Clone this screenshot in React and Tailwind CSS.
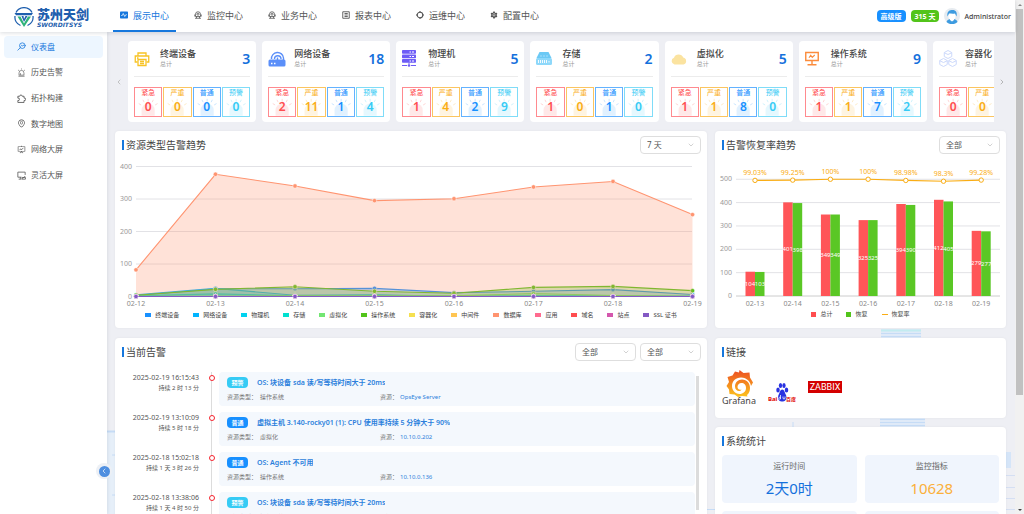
import { ChevronDown, ChevronLeft, ChevronRight } from 'lucide-react';
import {
    AiFillSetting,
    AiOutlineAlert,
    AiOutlineEnvironment,
    AiOutlineFundProjectionScreen
} from 'react-icons/ai';

/* ---------- icons ---------- */

const WaveIcon = ({ className }) => (
    <svg viewBox="0 0 16 16" className={className}>
        <rect x="0" y="1" width="16" height="14" rx="1.5" fill="currentColor" />
        <path d="M2.5 9h2L6.5 5l3 6 2-3.5h2" fill="none" stroke="#fff" strokeWidth="1.5" />
    </svg>
);

const MonitorIcon = ({ className }) => (
    <svg viewBox="0 0 16 16" className={className} fill="none" stroke="currentColor" strokeWidth="1.6">
        <path d="M3 11V6.5a5 5 0 0 1 10 0V11zM1.5 7v4M14.500 7v4M2 14.5h12" />
        <circle cx="8" cy="6.5" r="2" />
        <path d="M5 11v3.5M11 11v3.5" />
    </svg>
);

const ReportIcon = ({ className }) => (
    <svg viewBox="0 0 16 16" className={className} fill="none" stroke="currentColor" strokeWidth="1.8">
        <path d="M1.5 1.5h13v13h-13zM5 5h6.5M5 8h6.5M5 11h6.5" />
    </svg>
);

const OpsIcon = ({ className }) => (
    <svg viewBox="0 0 16 16" className={className} fill="none" stroke="currentColor" strokeWidth="2.2">
        <circle cx="8" cy="8" r="5.6" />
        <path d="M8 0v2.5M8 13.5V16M0 8h2.5M13.5 8H16" />
    </svg>
);

const DashboardIcon = ({ className }) => (
    <svg viewBox="0 0 16 16" className={className} fill="none" stroke="currentColor" strokeWidth="1.4" strokeLinecap="round">
        <circle cx="9.5" cy="6.5" r="5" />
        <path d="M6 10l-4.5 4.5M7 7.5l1.6-1.8 1.6 1.4L12 5.5" />
    </svg>
);

const PuzzleIcon = ({ className }) => (
    <svg viewBox="0 0 16 16" className={className} fill="none" stroke="currentColor" strokeWidth="1.5" strokeLinejoin="round">
        <path d="M1.5 4h3.3a2.2 2.2 0 1 1 4.4 0h3.3v3.3a2.2 2.2 0 1 1 0 4.2V15h-11v-3.5a2.2 2.2 0 1 0 0-4.2z" />
    </svg>
);

const ScreenIcon = ({ className }) => (
    <svg viewBox="0 0 16 16" className={className} fill="none" stroke="currentColor" strokeWidth="1.4">
        <path d="M8 11H1.5V2h13v5M3 14.5h5M6 11v3" />
        <path d="M10 13.5l4.5-4.5M9 11.5h6v3H9z" />
    </svg>
);

const PrinterIcon = () => (
    <svg viewBox="0 0 32 32" className="size-4" fill="none" stroke="#f7c325" strokeWidth="2.6">
        <path d="M8 10V4h16v6M7 22H2.5V10h27v12H25" />
        <path d="M8 17h16v12H8zM12 21h8M12 25h8M6 14h3" />
    </svg>
);

const RouterIcon = () => (
    <svg viewBox="0 0 36 32" className="h-4 w-[18px]" fill="none" stroke="#5b8ff9" strokeWidth="2.8">
        <path d="M7 16a12 12 0 0 1 24-2v6M13 16a6.5 6.5 0 0 1 13 0" />
        <rect x="1" y="17" width="34" height="14" rx="3" fill="#5b8ff9" stroke="none" />
        <path d="M19 13v6" />
        <path d="M6 25h3M12 25h3" stroke="#fff" />
    </svg>
);

const ServerIcon = () => (
    <svg viewBox="0 0 28 34" className="h-[17px] w-3.5" fill="#6d5cf6">
        <rect x="0" y="0" width="28" height="7.5" rx="1.5" />
        <rect x="0" y="9" width="28" height="7.5" rx="1.5" />
        <rect x="0" y="18" width="28" height="7.5" rx="1.5" />
        <path d="M13 25h2v4h-2zM0 30h10v2H0zM18 30h10v2H18z" />
        <circle cx="14" cy="31" r="2.6" />
        <path d="M15 3h3v2h-3zM20 3h4v2h-4zM15 12h3v2h-3zM20 12h4v2h-4zM15 21h3v2h-3zM20 21h4v2h-4z" fill="#fff" />
    </svg>
);

const StorageIcon = () => (
    <svg viewBox="0 0 32 26" className="h-[13px] w-4">
        <path d="M7 0h18l6 12H1z" fill="#6cc9f5" />
        <rect x="0" y="12" width="32" height="14" rx="3" fill="#8ed8fa" />
        <path d="M5 16v6M9 16v6M13 16v6M17 16v6M21 16v6M26 18v3" stroke="#fff" strokeWidth="1.8" />
        <path d="M9 8h2M15 8h2M21 8h2" stroke="#fff" strokeWidth="1.6" />
    </svg>
);

const CloudIcon = () => (
    <svg viewBox="0 0 32 24" className="h-3 w-4" fill="#fbe3a0">
        <path d="M7 23a7 7 0 0 1-1-13.5A10 10 0 0 1 24.5 9 7.2 7.2 0 0 1 25 23z" />
    </svg>
);

const OsIcon = () => (
    <svg viewBox="0 0 28 30" className="h-[15px] w-3.5" fill="none" stroke="#fb8c3c" strokeWidth="2.8">
        <path d="M1.5 3h25v16h-25zM14 19v8M5 27.5h18" />
        <path d="M8 13.5l3.5-5 3 4.5 5-5" strokeWidth="2.2" />
    </svg>
);

const ContainerIcon = () => (
    <svg viewBox="0 0 36 34" className="h-[17px] w-[18px]" fill="none" stroke="#ccd9fb" strokeWidth="2">
        <path d="M18 1l7.5 4v8L18 17l-7.5-4V5zM10.5 5.5L18 9l7.5-3.5" />
        <path d="M9 17l7.5 4v8L9 33l-7.5-4v-8zM1.5 21.5L9 25l7.5-3.5" />
        <path d="M27 17l7.5 4v8L27 33l-7.5-4v-8zM19.5 21.5L27 25l7.5-3.5" />
    </svg>
);

const BrandMark = () => (
    <svg viewBox="0 0 40 40" className="size-5 shrink-0" fill="none">
        <path d="M4 11a18 18 0 0 1 32 0M2 18a18 18 0 0 0 11 19M38 18a18 18 0 0 1-11 19" stroke="#1f5fae" strokeWidth="2.6" />
        <path d="M1 12h37l-3 4.5H4z" fill="#1f5fae" />
        <path d="M7 19h6l7 14 8-14h6L20 40z" fill="#2fb37a" />
        <path d="M15 18h12l-7 12z" fill="#1f5fae" />
        <path d="M19 18h4l-3 6z" fill="#fff" />
    </svg>
);

const Avatar = () => (
    <svg viewBox="0 0 32 32" className="size-4">
        <circle cx="16" cy="16" r="16" fill="#e6ebf0" />
        <path d="M5 28c2-6 7-6 11-6s9 0 11 6a16 16 0 0 1-22 0z" fill="#3d9be0" />
        <path d="M12 20h8v4l-4 3-4-3z" fill="#fff" />
        <rect x="9" y="8" width="14" height="15" rx="6" fill="#fff" />
        <path d="M7 17C5 6 12 4 17 4c7 0 10 5 8 13l-3-6c-4 1-9 0-12 0z" fill="#3d9be0" />
    </svg>
);

const AlarmShape = () => (
    <svg viewBox="0 0 28 20" className="absolute bottom-0 left-0 w-full" fill="currentColor" stroke="currentColor">
        <path d="M7 20v-6a7 7 0 0 1 14 0v6z" opacity="0.13" stroke="none" />
        <path d="M14 2v3M8.5 3l1.2 2.5M19.5 3l-1.2 2.5M4 7l2.5 1.5M24 7l-2.5 1.5" opacity="0.3" strokeWidth="0.8" />
    </svg>
);

/* ---------- data ---------- */

const tabs = [
    { label: '展示中心', icon: WaveIcon, active: true },
    { label: '监控中心', icon: MonitorIcon },
    { label: '业务中心', icon: MonitorIcon },
    { label: '报表中心', icon: ReportIcon },
    { label: '运维中心', icon: OpsIcon },
    { label: '配置中心', icon: AiFillSetting }
];

const menu = [
    { label: '仪表盘', icon: DashboardIcon, active: true },
    { label: '历史告警', icon: AiOutlineAlert },
    { label: '拓扑构建', icon: PuzzleIcon },
    { label: '数字地图', icon: AiOutlineEnvironment },
    { label: '网络大屏', icon: AiOutlineFundProjectionScreen },
    { label: '灵活大屏', icon: ScreenIcon }
];

const levels = [
    { label: '紧急', style: 'border-[#ff8a8f] text-[#ff4d4f]' },
    { label: '严重', style: 'border-[#fbc560] text-[#faad14]' },
    { label: '普通', style: 'border-[#63b2ff] text-[#1890ff]' },
    { label: '预警', style: 'border-[#7fdcf8] text-[#36cbf5]' }
];

const resources = [
    { name: '终端设备', total: 3, counts: [0, 0, 0, 0], icon: PrinterIcon },
    { name: '网络设备', total: 18, counts: [2, 11, 1, 4], icon: RouterIcon },
    { name: '物理机', total: 5, counts: [1, 4, 2, 9], icon: ServerIcon },
    { name: '存储', total: 2, counts: [1, 0, 1, 0], icon: StorageIcon },
    { name: '虚拟化', total: 5, counts: [1, 1, 8, 0], icon: CloudIcon },
    { name: '操作系统', total: 9, counts: [1, 1, 7, 2], icon: OsIcon },
    { name: '容器化', total: 0, counts: [0, 0, 0, 0], icon: ContainerIcon }
];

const trendDays = ['02-12', '02-13', '02-14', '02-15', '02-16', '02-17', '02-18', '02-19'];

const trend = [
    { name: '终端设备', color: '#1890ff', values: [3, 24, 24, 25, 12, 16, 21, 6] },
    { name: '网络设备', color: '#00b4ff', values: [5, 25, 4, 5, 1, 2, 2, 1] },
    { name: '物理机', color: '#00d2ef', values: [2, 8, 2, 4, 1, 2, 1, 1] },
    { name: '存储', color: '#00e0cf', values: [0, 0, 0, 0, 0, 0, 0, 0] },
    { name: '虚拟化', color: '#73e673', values: [1, 1, 2, 2, 2, 9, 3, 1] },
    { name: '操作系统', color: '#52c41a', values: [4, 22, 30, 16, 10, 28, 31, 18] },
    { name: '容器化', color: '#f5e050', values: [0, 0, 0, 0, 0, 0, 0, 0] },
    { name: '中间件', color: '#ffc552', values: [0, 0, 0, 0, 0, 0, 0, 0] },
    { name: '数据库', color: '#ff9470', values: [82, 376, 340, 295, 301, 337, 354, 252] },
    { name: '应用', color: '#ff6b8f', values: [0, 0, 0, 0, 0, 0, 0, 0] },
    { name: '域名', color: '#ff4d4f', values: [0, 0, 0, 0, 0, 0, 0, 0] },
    { name: '站点', color: '#d457ad', values: [0, 0, 0, 0, 0, 0, 0, 0] },
    { name: 'SSL 证书', color: '#8459c4', values: [0, 0, 0, 0, 0, 0, 0, 0] }
];

const recovery = [
    { day: '02-13', total: 104, fixed: 103, rate: 99.03 },
    { day: '02-14', total: 401, fixed: 398, rate: 99.25 },
    { day: '02-15', total: 349, fixed: 349, rate: 100 },
    { day: '02-16', total: 325, fixed: 325, rate: 100 },
    { day: '02-17', total: 394, fixed: 390, rate: 98.98 },
    { day: '02-18', total: 412, fixed: 405, rate: 98.3 },
    { day: '02-19', total: 279, fixed: 277, rate: 99.28 }
];

const alerts = [
    { time: '2025-02-19 16:15:43', last: '持续 2 时 13 分', level: '预警', title: 'OS: 块设备 sda 读/写等待时间大于 20ms', type: '操作系统', host: 'OpsEye Server' },
    { time: '2025-02-19 13:10:09', last: '持续 5 时 18 分', level: '普通', title: '虚拟主机 3.140-rocky01 (1): CPU 使用率持续 5 分钟大于 90%', type: '虚拟化', host: '10.10.0.202' },
    { time: '2025-02-18 15:02:18', last: '持续 1 天 3 时 26 分', level: '普通', title: 'OS: Agent 不可用', type: '操作系统', host: '10.10.0.136' },
    { time: '2025-02-18 13:38:06', last: '持续 1 天 4 时 50 分', level: '预警', title: 'OS: 块设备 sda 读/写等待时间大于 20ms', type: '操作系统', host: 'OpsEye Server' }
];

/* ---------- pieces ---------- */

function Header() {
    return (
        <header className="relative z-20 flex h-8 shrink-0 items-center bg-white pr-1 shadow-[0_1px_4px_rgba(0,21,41,0.15)]">
            <a href="#home" className="flex w-[113px] shrink-0 items-center gap-[3px] pl-3.5 pt-[2px]">
                <BrandMark />
                <span className="flex flex-col text-[#1f5fae]">
                    <span className="text-[13px] font-black leading-[14px] whitespace-nowrap">苏州天剑</span>
                    <span className="font-['DejaVu_Sans'] text-[6px] font-bold italic leading-[7px]">SWORDITSYS</span>
                </span>
            </a>
            <nav className="flex h-full gap-[11px]">
                {tabs.map(({ label, icon: Icon, active }) => (
                    <a
                        key={label}
                        href="#tab"
                        className={`flex h-full items-center gap-[5px] border-b-2 px-[7px] text-[9px] whitespace-nowrap ${active ? 'border-[#1677dd] text-[#1677dd]' : 'border-transparent text-[#555]'}`}
                    >
                        <Icon className="size-2 shrink-0" />
                        {label}
                    </a>
                ))}
            </nav>
            <div className="ml-auto flex items-center gap-[5px]">
                <span className="flex h-3 items-center rounded bg-[#1890ff] px-1 text-[7px] font-bold text-white">高级版</span>
                <span className="flex h-3 items-center rounded bg-[#52c41a] px-1 text-[7px] font-bold text-white">315 天</span>
                <button className="flex items-center gap-1 text-[7px] font-medium text-[#444]">
                    <Avatar />
                    Administrator
                </button>
            </div>
        </header>
    );
}

function Sidebar() {
    return (
        <aside className="relative z-10 w-[107px] shrink-0 bg-white px-1 pt-1 shadow-[1px_0_3px_rgba(0,21,41,0.08)]">
            <nav className="grid h-[150px] gap-1">
                {menu.map(({ label, icon: Icon, active }) => (
                    <a
                        key={label}
                        href="#menu"
                        className={`flex items-center gap-[5px] rounded pl-[13px] text-[8px] ${active ? 'bg-[#edf6ff] text-[#1677dd]' : 'text-[#555]'}`}
                    >
                        <Icon className="size-[9px] shrink-0" />
                        {label}
                    </a>
                ))}
            </nav>
            <button aria-label="收起菜单" className="absolute -right-[5px] top-[431px] flex size-4 items-center justify-center rounded-full bg-[#edf0f5]">
                <span className="flex size-[11px] items-center justify-center rounded-full bg-[#4f8fe0] text-white">
                    <ChevronLeft className="size-2" />
                </span>
            </button>
        </aside>
    );
}

function ResourceCard({ name, total, counts, icon: Icon }) {
    return (
        <article className="h-[81px] rounded bg-white px-1.5">
            <div className="flex h-9 items-center border-b border-[#ececec]">
                <span className="flex w-[26px] shrink-0 items-center">
                    <Icon />
                </span>
                <div className="flex flex-col gap-[3px] whitespace-nowrap">
                    <h3 className="text-[9px] font-medium leading-[9px] text-[#444]">{name}</h3>
                    <p className="text-[6px] leading-[7px] text-[#999]">总计</p>
                </div>
                <strong className="ml-auto text-[14px] font-semibold text-[#1470dc]">{total}</strong>
            </div>
            <ul className="mt-2.5 grid grid-cols-4 gap-px">
                {levels.map((level, i) => (
                    <li key={level.label} className={`relative flex h-[30px] flex-col items-center border pt-px ${level.style}`}>
                        <AlarmShape />
                        <span className="relative text-[7px] leading-[8px]">{level.label}</span>
                        <span className="relative text-[12px] font-semibold leading-[20px]">{counts[i]}</span>
                    </li>
                ))}
            </ul>
        </article>
    );
}

function ResourceStrip() {
    return (
        <section className="flex items-center">
            <button aria-label="上一页" className="flex w-[13px] shrink-0 text-[#aaa]">
                <ChevronLeft className="size-2" />
            </button>
            <div className="grid min-w-0 flex-1 auto-cols-[14.8%] grid-flow-col gap-1.5 overflow-hidden">
                {resources.map((r) => (
                    <ResourceCard key={r.name} {...r} />
                ))}
            </div>
            <button aria-label="下一页" className="flex w-3 shrink-0 justify-end text-[#999]">
                <ChevronRight className="size-2" />
            </button>
        </section>
    );
}

function Picker({ label, value }) {
    return (
        <label className="relative block w-[61px]">
            <select aria-label={label} className="block h-[18px] w-full appearance-none rounded border border-[#dedede] bg-white pl-1.5 text-[8px] leading-none text-[#555]">
                <option>{value}</option>
            </select>
            <ChevronDown className="pointer-events-none absolute right-1.5 top-[5px] size-2 text-[#bbb]" />
        </label>
    );
}

function Panel({ title, extra, className = '', children }) {
    return (
        <section className={`min-w-0 rounded bg-white shadow-[0_0_3px_rgba(0,0,0,0.05)] ${className}`}>
            <div className="flex items-center justify-between pl-[7px] pr-1.5 pt-1">
                <h2 className="flex h-[19px] items-center gap-[2px] text-[10px] text-[#444]">
                    <span className="h-2.5 w-[2px] bg-[#1677dd]" />
                    {title}
                </h2>
                {extra}
            </div>
            {children}
        </section>
    );
}

function TrendChart() {
    const x = (i) => 21 + i * 79.5;
    const y = (v) => 142.5 - v * 0.325;
    return (
        <>
            <svg viewBox="0 0 592 154" className="block w-full text-[7px]">
                {[0, 100, 200, 300, 400].map((v) => (
                    <g key={v}>
                        <line x1="21" x2="577" y1={y(v)} y2={y(v)} stroke="#e2e2e6" />
                        <text x="17" y={y(v) + 2} textAnchor="end" fill="#999">{v}</text>
                    </g>
                ))}
                {trend.map(({ name, color, values }) => {
                    const points = values.map((v, i) => `${x(i)},${y(v)}`).join(' ');
                    return (
                        <g key={name}>
                            <polygon points={`${x(0)},${y(0)} ${points} ${x(7)},${y(0)}`} fill={color} opacity="0.27" />
                            <polyline points={points} fill="none" stroke={color} strokeWidth="1.1" />
                            {values.map((v, i) => (
                                <circle key={i} cx={x(i)} cy={y(v)} r="2.2" fill={color} stroke="#fff" strokeWidth="0.5" />
                            ))}
                        </g>
                    );
                })}
                {trendDays.map((d, i) => (
                    <text key={d} x={x(i)} y="152" textAnchor="middle" fill="#888">{d}</text>
                ))}
            </svg>
            <ul className="mt-[3px] flex justify-center gap-3.5">
                {trend.map(({ name, color }) => (
                    <li key={name} className="flex items-center gap-1 text-[6px] leading-[8px] whitespace-nowrap text-[#444]">
                        <span className="h-1 w-1.5" style={{ background: color }} />
                        {name}
                    </li>
                ))}
            </ul>
        </>
    );
}

function RecoveryChart() {
    const x = (i) => 40 + i * 37.7;
    const y = (v) => 142 - v * 0.2335;
    return (
        <>
            <svg viewBox="0 0 291 154" className="block w-full text-[7px]">
                {[0, 100, 200, 300, 400, 500].map((v) => (
                    <g key={v}>
                        <line x1="21" x2="285" y1={y(v)} y2={y(v)} stroke={v ? '#e2e2e6' : '#ccc'} />
                        <text x="17" y={y(v) + 2} textAnchor="end" fill="#999">{v}</text>
                    </g>
                ))}
                {recovery.map(({ day, total, fixed }, i) => (
                    <g key={day} textAnchor="middle">
                        <rect x={x(i) - 9.5} y={y(total)} width="9.5" height={y(0) - y(total)} fill="#ff5558" />
                        <rect x={x(i)} y={y(fixed)} width="9.5" height={y(0) - y(fixed)} fill="#5ac725" />
                        <text x={x(i) - 5} y={y(total / 2) + 2} fontSize="6" fill="#fff">{total}</text>
                        <text x={x(i) + 5} y={y(fixed / 2) + 2} fontSize="6" fill="#fff">{fixed}</text>
                        <text x={x(i)} y="152" fill="#888">{day}</text>
                    </g>
                ))}
                <polyline points={recovery.map((r, i) => `${x(i)},${y(r.rate * 5)}`).join(' ')} fill="none" stroke="#faad14" strokeWidth="1.2" />
                {recovery.map(({ day, rate }, i) => (
                    <g key={day}>
                        <circle cx={x(i)} cy={y(rate * 5)} r="2.2" fill="#fff" stroke="#faad14" />
                        <text x={x(i)} y={y(rate * 5) - 5} textAnchor="middle" fill="#faad14">{rate}%</text>
                    </g>
                ))}
            </svg>
            <ul className="mt-[2px] flex justify-center gap-3.5 text-[6px] leading-[8px] text-[#444]">
                <li className="flex items-center gap-1"><span className="size-[5px] bg-[#ff4d4f]" />总计</li>
                <li className="flex items-center gap-1"><span className="size-[5px] bg-[#52c41a]" />恢复</li>
                <li className="flex items-center gap-1"><span className="h-px w-1.5 bg-[#faad14]" />恢复率</li>
            </ul>
        </>
    );
}

function AlertList() {
    return (
        <div className="mt-[11px] flex pr-2">
            <ol className="min-w-0 flex-1">
                {alerts.map((a) => (
                    <li key={a.time} className="flex h-10">
                        <div className="w-[84px] shrink-0 pt-[2px] text-right text-[#555]">
                            <time className="block text-[7px] leading-[8px]">{a.time}</time>
                            <span className="block pt-[2px] text-[6px] leading-[8px]">{a.last}</span>
                        </div>
                        <div className="relative flex w-5 shrink-0 justify-center pl-[5px]">
                            <span className="h-full w-px bg-[#dcdcdc]" />
                            <span className="absolute top-[3px] size-1.5 rounded-full border border-[#f5222d] bg-white" />
                        </div>
                        <div className="mb-1.5 min-w-0 flex-1 rounded bg-[#f4f8fd] px-2 pt-[5px]">
                            <div className="flex items-center gap-[9px]">
                                <span className={`flex h-[11px] w-[21px] items-center justify-center rounded text-[6px] font-bold text-white ${a.level === '预警' ? 'bg-[#36cbf5]' : 'bg-[#1890ff]'}`}>
                                    {a.level}
                                </span>
                                <a href="#alert" className="truncate text-[7px] font-semibold leading-[10px] text-[#2b7fdc]">{a.title}</a>
                            </div>
                            <div className="mt-[5px] flex text-[6px] leading-[8px] text-[#777]">
                                <span className="w-[33px]">资源类型：</span>
                                <span className="w-[120px]">{a.type}</span>
                                <span className="w-5">资源：</span>
                                <a href="#host" className="text-[#2b7fdc]">{a.host}</a>
                            </div>
                        </div>
                    </li>
                ))}
            </ol>
            <div className="ml-px mt-1 h-[134px] w-[3px] bg-[#dcdcdc]" />
        </div>
    );
}

function Links() {
    return (
        <div className="mt-2 flex h-[49px] items-start gap-3 pl-[7px]">
            <a href="#grafana" aria-label="Grafana" className="mt-px">
                <svg viewBox="0 0 68 70" className="h-[35px] w-[34px]">
                    <defs>
                        <linearGradient id="flame" x1="0" y1="1" x2="0" y2="0">
                            <stop offset="0" stopColor="#fcc41c" />
                            <stop offset="1" stopColor="#ec4d22" />
                        </linearGradient>
                    </defs>
                    <path
                        d="M35 0l8 6 12-1 1 10 6 10-4 7c-1-8-8-17-20-17-11 0-18 8-18 17 0 8 6 16 15 16 7 0 13-5 13-12s-4-10-9-10-8 4-8 8 4 7 8 5c-3 6-13 3-13-6 0-8 6-14 14-14 10 0 16 8 16 17 0 6-2 11-6 14l1 3-11-1-8 2-7-5-10-1-1-9-5-7 5-8-3-10 10-3 5-8 8 2z"
                        fill="url(#flame)"
                    />
                    <text x="34" y="68" textAnchor="middle" fontSize="18" fill="#444">Grafana</text>
                </svg>
            </a>
            <a href="#baidu" aria-label="百度" className="mt-[14px]">
                <svg viewBox="0 0 56 38" className="h-[19px] w-7">
                    <g fill="#2932e1">
                        <ellipse cx="20" cy="14" rx="3.5" ry="5" />
                        <ellipse cx="25" cy="5" rx="3.3" ry="5" />
                        <ellipse cx="32" cy="5" rx="3.3" ry="5" />
                        <ellipse cx="37" cy="14" rx="3.5" ry="5" />
                        <path d="M28.500 13c4 0 5 6 7 10 3 6 1 15-7 14-8 1-10-8-7-14 2-4 3-10 7-10z" />
                    </g>
                    <text x="0" y="36" fontSize="12" fontWeight="bold" fill="#e10602">Bai</text>
                    <text x="36" y="35" fontSize="10" fontWeight="bold" fill="#e10602">百度</text>
                    <path d="M25 24v8M25 29a2 2 0 1 0-.1 3M30 27v4q2 2 4 0v-4" fill="none" stroke="#fff" strokeWidth="1.5" />
                </svg>
            </a>
            <a href="#zabbix" className="mt-3 flex h-3 w-[34px] items-center justify-center bg-[#d40000] text-[9px] text-white">
                <span className="font-['Roboto'] leading-[12px]">ZABBIX</span>
            </a>
        </div>
    );
}

function Stats() {
    return (
        <div className="mt-[5px] grid grid-cols-2 gap-2 px-[7px] text-center">
            <div className="h-12 rounded bg-[#f0f5fd] pt-1.5">
                <p className="text-[8px] leading-[10px] text-[#666]">运行时间</p>
                <p className="pt-[7px] text-[15px] leading-[20px] text-[#1470dc]">2天0时</p>
            </div>
            <div className="h-12 rounded bg-[#f0f5fd] pt-1.5">
                <p className="text-[8px] leading-[10px] text-[#666]">监控指标</p>
                <p className="pt-[7px] text-[15px] leading-[20px] text-[#fbb03b]">10628</p>
            </div>
            <div className="h-12 rounded bg-[#f0f5fd]" />
            <div className="h-12 rounded bg-[#f0f5fd]" />
        </div>
    );
}

// faint city lines that show between the panels
const Backdrop = () => (
    <svg viewBox="0 0 908 482" className="absolute inset-0 h-full w-full" preserveAspectRatio="none" stroke="#c6dcf6">
        <rect x="0" y="400" width="8" height="82" fill="#e6eff9" stroke="none" />
        <path d="M0 399.5h8" strokeWidth="2" />
        <path d="M5 423h3M5 463h3M600 477.5h8M686 390v5" />
        <path d="M774 297h40v9h-40zM773 386h45v9h-45z" fill="#dfeaf8" stroke="none" />
        <path d="M774 298.5h40" stroke="#c3ecf0" strokeWidth="2" />
        <path d="M774 301.5h40M774 304.5h40M773 387.5h45M773 390.5h45M773 393.5h45" />
        <rect x="898" y="420" width="6" height="16" fill="#d5e5f8" stroke="none" />
        <path d="M898 443.5h10M898 455.5h10M898 466.5h10M898 477.5h10" stroke="#d5dff2" />
    </svg>
);

const Scrollbar = () => (
    <div className="flex w-[9px] shrink-0 flex-col items-center bg-[#f1f1f1]">
        <span className="flex h-[9px] items-center">
            <svg viewBox="0 0 4 2" className="h-[2px] w-1" fill="#888"><path d="M0 2h4L2 0z" /></svg>
        </span>
        <span className="h-[75%] w-[7px] bg-[#c1c1c1]" />
        <span className="mt-auto flex h-[9px] items-center">
            <svg viewBox="0 0 4 2" className="h-[2px] w-1" fill="#444"><path d="M0 0h4L2 2z" /></svg>
        </span>
    </div>
);

export default function App() {
    return (
        <div className="flex h-screen overflow-hidden font-['Noto_Sans','Noto_Sans_CJK_SC',sans-serif] leading-none">
            <div className="flex min-w-0 flex-1 flex-col">
                <Header />
                <div className="flex min-h-0 flex-1">
                    <Sidebar />
                    <main className="relative min-w-0 flex-1 overflow-hidden bg-[#eeeff4]">
                        <Backdrop />
                        <div className="relative flex flex-col gap-[9px] pb-4 pl-2 pr-[9px] pt-[9px]">
                            <ResourceStrip />
                            <div className="grid grid-cols-[592fr_291fr] gap-x-2 gap-y-2.5">
                                <Panel title="资源类型告警趋势" className="pb-[9px]" extra={<Picker label="时间范围" value="7 天" />}>
                                    <TrendChart />
                                </Panel>
                                <Panel title="告警恢复率趋势" className="pb-[9px]" extra={<Picker label="资源类型" value="全部" />}>
                                    <RecoveryChart />
                                </Panel>
                                <Panel
                                    title="当前告警"
                                    extra={
                                        <div className="flex gap-1">
                                            <Picker label="资源类型" value="全部" />
                                            <Picker label="告警级别" value="全部" />
                                        </div>
                                    }
                                >
                                    <AlertList />
                                </Panel>
                                <div className="flex min-w-0 flex-col gap-[9px]">
                                    <Panel title="链接">
                                        <Links />
                                    </Panel>
                                    <Panel title="系统统计" className="flex-1">
                                        <Stats />
                                    </Panel>
                                </div>
                            </div>
                        </div>
                    </main>
                </div>
            </div>
            <Scrollbar />
        </div>
    );
}
